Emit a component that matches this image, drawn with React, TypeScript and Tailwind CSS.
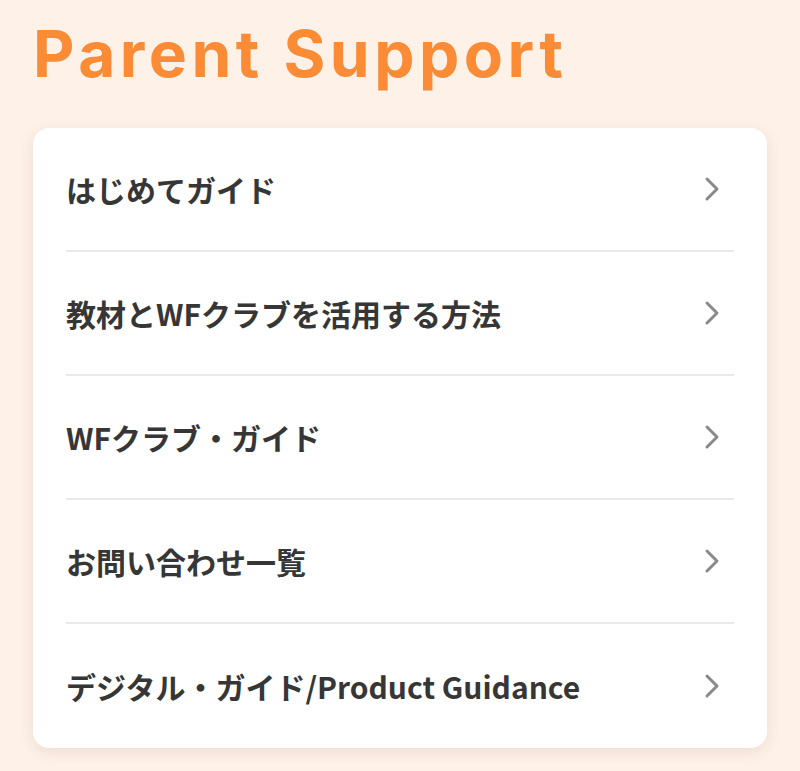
import React from "react";

const items = [
  "はじめてガイド",
  "教材とWFクラブを活用する方法",
  "WFクラブ・ガイド",
  "お問い合わせ一覧",
  "デジタル・ガイド/Product Guidance",
];

function Chevron() {
  return (
    <svg width="16" height="26" viewBox="0 0 16 26" fill="none" className="shrink-0">
      <path d="M3 3 L13 13 L3 23" stroke="#8a8a8a" strokeWidth="3" strokeLinecap="round" strokeLinejoin="round" />
    </svg>
  );
}

export default function App() {
  return (
    <div className="w-[800px] h-[771px] bg-[#fdf1e8] overflow-hidden px-[33px] pt-[14px]">
      <h1
        className="text-[64px] leading-[80px] font-bold text-[#fb8b35] tracking-[4.5px]"
        style={{ fontFamily: '"Inter", sans-serif' }}
      >
        Parent Support
      </h1>
      <div className="mt-[34px] bg-white rounded-[16px] shadow-[0_4px_14px_rgba(120,90,60,0.12)] px-[33px]">
        {items.map((t, i) => (
          <div
            key={t}
            className={`h-[124px] flex items-center justify-between pr-[14px] ${i < items.length - 1 ? "border-b-2 border-[#eaeaea]" : ""}`}
          >
            <span
              className="text-[30px] font-bold text-[#363636]"
              style={{ fontFamily: '"Noto Sans CJK JP", "Noto Sans", sans-serif' }}
            >
              {t}
            </span>
            <Chevron />
          </div>
        ))}
      </div>
    </div>
  );
}
